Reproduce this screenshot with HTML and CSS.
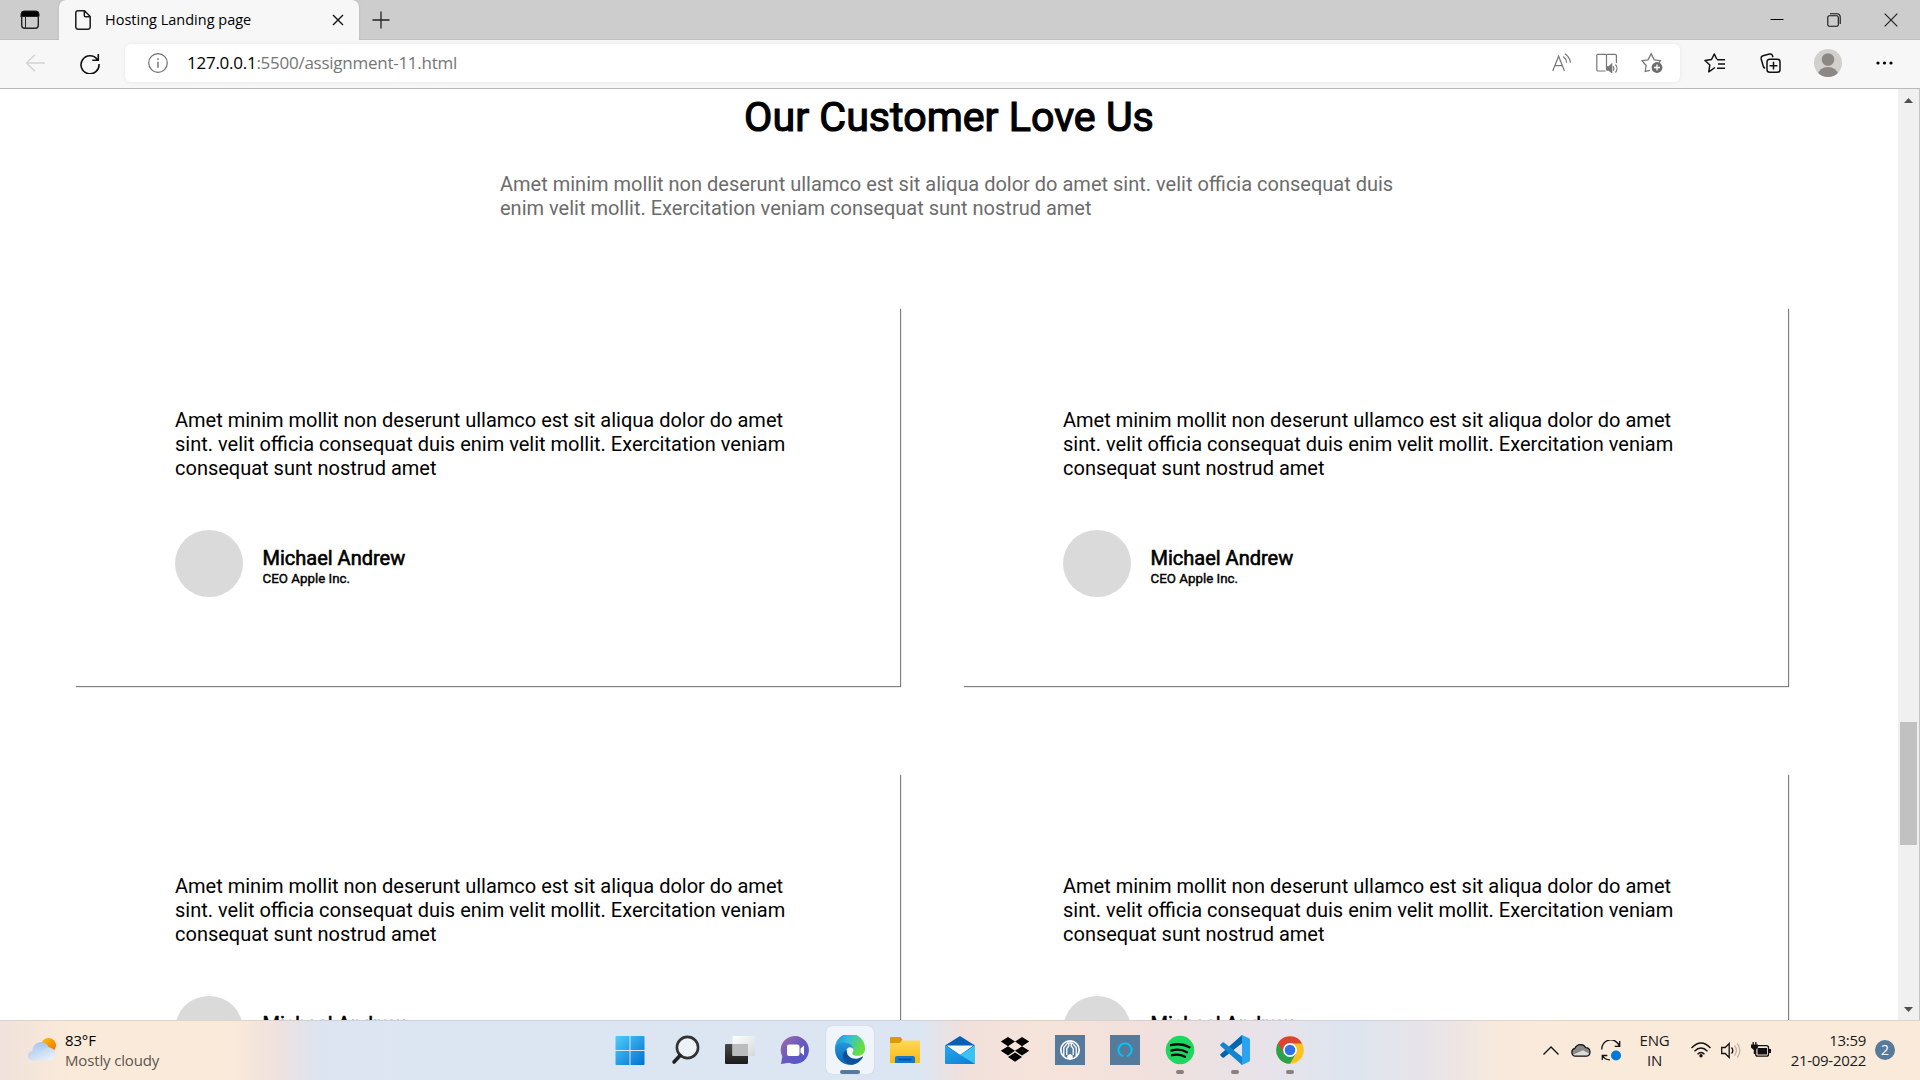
FILE: index.html
```html
<!DOCTYPE html>
<html lang="en">
<head>
<meta charset="utf-8">
<title>Hosting Landing page</title>
<link rel="stylesheet" href="styles.css">
</head>
<body>
<div class="screen">
  <header class="tabstrip">
    <div class="tab-menu"><svg width="20" height="20" viewBox="0 0 20 20"><rect x="1.7" y="1.7" width="16.6" height="16.6" rx="3" fill="none" stroke="#222" stroke-width="1.4"/><path d="M1 7V4a3 3 0 0 1 3-3h12a3 3 0 0 1 3 3v2.500H1zM5.500 6v12" fill="#000" stroke="#222" stroke-width="1"/></svg></div>
    <div class="tab">
      <svg class="file-icon" width="16" height="20" viewBox="0 0 16 20" fill="none" stroke="#1b1b1b" stroke-width="1.5" stroke-linejoin="round"><path d="M3 .8h6.500l5.700 5.700V17a2.200 2.200 0 0 1-2.200 2.200H3A2.200 2.200 0 0 1 .8 17V3A2.200 2.200 0 0 1 3 .8zM9.300 1v4.500c0 .8.500 1.300 1.300 1.300H15"/></svg>
      <span class="tab-title">Hosting Landing page</span>
      <svg class="tab-close" width="12" height="12" viewBox="0 0 12 12" stroke="#111" stroke-width="1.400"><path d="M1 1l10 10M11 1L1 11"/></svg>
    </div>
    <div class="new-tab"><svg width="18" height="18" viewBox="0 0 18 18" stroke="#222" stroke-width="1.300"><path d="M9 .5v17M.5 9h17"/></svg></div>
    <div class="window-controls">
      <span><svg width="14" height="14" viewBox="0 0 14 14"><path d="M.5 6.500h13" stroke="#000"/></svg></span>
      <span><svg width="14" height="14" viewBox="0 0 14 14" fill="none" stroke="#111" stroke-width="1.100"><rect x=".8" y="2.800" width="10.500" height="10.500" rx="1.500"/><path d="M3 .8h7.200A3 3 0 0 1 13.200 3.800V11"/></svg></span>
      <span><svg width="14" height="14" viewBox="0 0 14 14" stroke="#222" stroke-width="1.200"><path d="M.7.7l12.600 12.600M13.300.7L.7 13.300"/></svg></span>
    </div>
  </header>

  <nav class="toolbar">
    <div class="nav-btn back"><svg width="20" height="18" viewBox="0 0 20 18" fill="none" stroke="#d3d3d3" stroke-width="1.500"><path d="M20 9H1.500M10 .7L1.500 9l8.500 8.300"/></svg></div>
    <div class="nav-btn reload"><svg width="20" height="21" viewBox="0 0 20 21" fill="none" stroke="#111" stroke-width="1.600"><path d="M17.300 6.500A9 9 0 1 0 19 11M18.300 1v6.200h-6"/></svg></div>
    <div class="address">
      <svg class="info" width="20" height="20" viewBox="0 0 20 20" fill="none" stroke="#6f6f6f" stroke-width="1.200"><circle cx="10" cy="10" r="9.300"/><path d="M10 8.800v6M10 5.300v1.600" stroke-width="1.400"/></svg>
      <span class="url"><b>127.0.0.1</b>:5500/assignment-11.html</span>
      <div class="address-actions">
        <span><svg width="20" height="20" viewBox="0 0 20 20" fill="none" stroke="#777" stroke-width="1.200"><path d="M.7 18L6.600 3.200 12.500 18M2.900 12.600h7.500M11.200 3.500a9 9 0 0 1 3.500 6.200M12.800.8a12 12 0 0 1 5.600 8.700"/></svg></span>
        <span><svg width="22" height="20" viewBox="0 0 22 20" fill="none" stroke="#777" stroke-width="1.200"><path d="M9.500 18H2a1.200 1.200 0 0 1-1.200-1.200V2.500A1.200 1.200 0 0 1 2 1.300h7q1.500 0 1.500 1.500 0-1.500 1.500-1.500h7.200a1.200 1.200 0 0 1 1.200 1.200V10M10.500 2.800V17M17 13.300a3.500 3.500 0 0 1 0 4.400M19.400 11.500a6 6 0 0 1 0 8"/><path d="M11 13.800h2l2.700-2.600v8.400L13 17.200h-2z" fill="#777"/></svg></span>
        <span><svg width="22" height="22" viewBox="0 0 22 22" fill="none" stroke="#777" stroke-width="1.300"><path d="M9 18.300l-4.800 1.200.9-6L1 8.700l6-.8L10.200 1.800l3 6 6.200.9-1.500 1.800"/><circle cx="16" cy="15.500" r="5.400" fill="#6b6b6b" stroke="none"/><path d="M16 12.500v6M13 15.500h6" stroke="#fff"/></svg></span>
      </div>
    </div>
    <div class="actions">
      <span><svg width="22" height="20" viewBox="0 0 22 20" fill="none" stroke="#111" stroke-width="1.500" stroke-linejoin="round"><path d="M11 14.500l-6.200 4.300 1-6.800L1 7.500l6.500-1L10.300 1l2.500 5.200M13 6.700h8M14 11h7M13 15.300h8"/></svg></span>
      <span><svg width="21" height="20" viewBox="0 0 21 20" fill="none" stroke="#111" stroke-width="1.500"><path d="M5 15.300Q3.500 14.500 3.200 13L1.200 6Q.7 3.500 3 2.800L9.500 1q2.400-.5 3 1.800l.4 1.500"/><rect x="7" y="6.200" width="13" height="13" rx="2.800"/><path d="M13.500 8.800v7.800M9.600 12.700h7.800"/></svg></span>
      <span><svg width="28" height="28" viewBox="0 0 28 28"><defs><clipPath id="face"><circle cx="14" cy="14" r="14"/></clipPath></defs><circle cx="14" cy="14" r="14" fill="#d2d0cc"/><circle cx="14" cy="10.500" r="6.300" fill="#8b8784"/><ellipse cx="14" cy="25.500" rx="9.800" ry="7.500" fill="#8b8784" clip-path="url(#face)"/></svg></span>
      <span><svg width="17" height="4" viewBox="0 0 17 4"><circle cx="2" cy="2" r="1.600"/><circle cx="8.500" cy="2" r="1.600"/><circle cx="15" cy="2" r="1.600"/></svg></span>
    </div>
  </nav>

  <div class="viewport">
    <main class="page">
      <h1>Our Customer Love Us</h1>
      <p class="intro">Amet minim mollit non deserunt ullamco est sit aliqua dolor do amet sint. velit officia consequat duis<br>enim velit mollit. Exercitation veniam consequat sunt nostrud amet</p>
      <section class="cards">
        <article class="card">
          <p class="quote">Amet minim mollit non deserunt ullamco est sit aliqua dolor do amet<br>sint. velit officia consequat duis enim velit mollit. Exercitation veniam<br>consequat sunt nostrud amet</p>
          <div class="person"><div class="avatar"></div><div><div class="name">Michael Andrew</div><div class="role">CEO Apple Inc.</div></div></div>
        </article>
        <article class="card">
          <p class="quote">Amet minim mollit non deserunt ullamco est sit aliqua dolor do amet<br>sint. velit officia consequat duis enim velit mollit. Exercitation veniam<br>consequat sunt nostrud amet</p>
          <div class="person"><div class="avatar"></div><div><div class="name">Michael Andrew</div><div class="role">CEO Apple Inc.</div></div></div>
        </article>
        <article class="card">
          <p class="quote">Amet minim mollit non deserunt ullamco est sit aliqua dolor do amet<br>sint. velit officia consequat duis enim velit mollit. Exercitation veniam<br>consequat sunt nostrud amet</p>
          <div class="person"><div class="avatar"></div><div><div class="name">Michael Andrew</div><div class="role">CEO Apple Inc.</div></div></div>
        </article>
        <article class="card">
          <p class="quote">Amet minim mollit non deserunt ullamco est sit aliqua dolor do amet<br>sint. velit officia consequat duis enim velit mollit. Exercitation veniam<br>consequat sunt nostrud amet</p>
          <div class="person"><div class="avatar"></div><div><div class="name">Michael Andrew</div><div class="role">CEO Apple Inc.</div></div></div>
        </article>
      </section>
    </main>
    <aside class="scrollbar">
      <svg width="9" height="5" viewBox="0 0 9 5"><path d="M0 5L4.500 0 9 5z" fill="#505050"/></svg>
      <div class="thumb"></div>
      <svg class="down" width="9" height="5" viewBox="0 0 9 5"><path d="M0 0l4.500 5L9 0z" fill="#505050"/></svg>
    </aside>
  </div>

  <footer class="taskbar">
    <div class="weather">
      <svg width="30" height="24" viewBox="0 0 30 24"><defs><linearGradient id="sun" x1="0" y1="0" x2="1" y2="1"><stop offset="0" stop-color="#fdc500"/><stop offset="1" stop-color="#f06a00"/></linearGradient><linearGradient id="cl1" x1="0" y1="0" x2="0" y2="1"><stop offset="0" stop-color="#a9c5f2"/><stop offset="1" stop-color="#d9e8fa"/></linearGradient><linearGradient id="cl2" x1="0" y1="0" x2="1" y2="1"><stop offset="0" stop-color="#a9c8ef"/><stop offset="1" stop-color="#f2f7fc"/></linearGradient></defs><circle cx="21.500" cy="7.500" r="7.500" fill="url(#sun)"/><path d="M5.500 14a8.500 8.500 0 0 1 16.300-4.500 6 6 0 1 1 .2 12.500H6z" fill="url(#cl1)"/><path d="M5 22.500a4.700 4.700 0 0 1 0-9.300q5-1 8 1.800 3-5.500 8.500-5.500a6.500 6.500 0 0 1 0 13z" fill="url(#cl2)"/></svg>
      <div class="weather-text"><div>83°F</div><div class="muted">Mostly cloudy</div></div>
    </div>

    <div class="apps">
      <div class="app"><svg width="30" height="30" viewBox="0 0 30 30"><defs><linearGradient id="win" gradientUnits="userSpaceOnUse" x1="0" y1="0" x2="30" y2="30"><stop offset="0" stop-color="#4fd0fb"/><stop offset="1" stop-color="#006fd0"/></linearGradient></defs><path d="M.5 2q0-1 1-1h13v14H.5zM15.500 1h13q1 0 1 1v13h-14zM.5 16h14v14h-13q-1 0-1-1zM15.500 16h14v13q0 1-1 1h-13z" fill="url(#win)"/></svg></div>
      <div class="app"><svg width="30" height="30" viewBox="0 0 30 30" fill="none"><circle cx="17.500" cy="12.500" r="10.600" fill="#eef2f6" stroke="#333" stroke-width="2.600"/><path d="M10 20.500L4 27" stroke="#222" stroke-width="3.600" stroke-linecap="round"/></svg></div>
      <div class="app"><svg width="30" height="30" viewBox="0 0 30 30"><defs><linearGradient id="tv" x1="0" y1="0" x2="0" y2="1"><stop offset="0" stop-color="#484848"/><stop offset="1" stop-color="#1b1b1b"/></linearGradient><linearGradient id="tv2" x1="0" y1="0" x2="1" y2="1"><stop offset="0" stop-color="#fff"/><stop offset="1" stop-color="#d5d8db"/></linearGradient></defs><rect x="0" y="9" width="23" height="20" rx="1" fill="url(#tv)"/><rect x="7.500" y="1" width="22.500" height="20" rx="1" fill="url(#tv2)"/><path d="M7.500 9H23v12H7.500z" fill="#bcbcbc"/></svg></div>
      <div class="app"><svg width="30" height="30" viewBox="0 0 30 30"><defs><linearGradient id="chat" x1="0" y1="0" x2="1" y2="1"><stop offset="0" stop-color="#a66ba5"/><stop offset=".5" stop-color="#675abf"/><stop offset="1" stop-color="#4d55ce"/></linearGradient></defs><path d="M15 1a14 14 0 1 1-6 26.700L1 29l1.300-7.500A14 14 0 0 1 15 1z" fill="url(#chat)"/><rect x="7" y="9.500" width="12.500" height="11.500" rx="2" fill="#fff"/><path d="M20.500 13.500l3.500-3v10l-3.500-3z" fill="#fff"/></svg></div>
      <div class="app active"><svg width="30" height="30" viewBox="0 0 30 30"><defs><linearGradient id="eg1" x1="0" y1="0" x2="1" y2=".4"><stop offset="0" stop-color="#158ed2"/><stop offset=".45" stop-color="#31bde0"/><stop offset="1" stop-color="#68df3d"/></linearGradient><linearGradient id="eg2" x1="0" y1="0" x2="0" y2="1"><stop offset="0" stop-color="#2596dd"/><stop offset="1" stop-color="#0864b5"/></linearGradient></defs><path d="M0 13A15 15 0 0 1 30 14c0 4-3 6.800-7.300 6.800-3.500 0-6-1-5.400-2.800.7-1 1.300-2 1.100-3.500C18 11 14 9.500 10 10Z" fill="url(#eg1)"/><path d="M0 15Q0 7.500 8 7.500c6.500 0 10.400 3.700 10.400 7-1-2-3-2.800-5.200-1.700-4.700 2.600-3 13 5.800 16.500A15 15 0 0 1 0 15z" fill="url(#eg2)"/><path d="M12 14.500c-1.500 6 4.500 10.500 11 9 2-.4 3.500-1.300 4.500-1.900.6-.2.700.2.300.8C23 29.500 17 31 12.500 28.500 5.500 24 7 17 12 14.500z" fill="#0d519c"/></svg></div>
      <div class="app"><svg width="30" height="30" viewBox="0 0 30 30"><defs><linearGradient id="fo" x1="0" y1="0" x2="0" y2="1"><stop offset="0" stop-color="#ffd85a"/><stop offset="1" stop-color="#fbb90b"/></linearGradient></defs><path d="M0 3q0-1 1-1h9.500l2 2.500-2.500 4H0z" fill="#dc9a00"/><path d="M0 8h9q2 0 3.500-2.500H29q1 0 1 1V27q0 1-1 1H1q-1 0-1-1z" fill="url(#fo)"/><path d="M5 28v-5q0-2 2-2h16q2 0 2 2v5z" fill="#1177cf"/><path d="M8.500 24.500h13" stroke="#084b8c" stroke-width="1.500"/></svg></div>
      <div class="app"><svg width="30" height="30" viewBox="0 0 30 30"><defs><linearGradient id="ml" x1="0" y1="0" x2="1" y2="1"><stop offset="0" stop-color="#28a9eb"/><stop offset="1" stop-color="#087bd8"/></linearGradient></defs><path d="M0 10.500L15 1l15 9.500-15 11z" fill="#0760b4"/><path d="M1.500 10.500h27L15 20z" fill="#f4f5f6"/><path d="M30 10.500V28q0 1-1 1H1z" fill="#39c3f3"/><path d="M0 10.500L30 29H1q-1 0-1-1z" fill="url(#ml)"/></svg></div>
      <div class="app"><svg width="30" height="30" viewBox="0 0 30 30"><path d="M8 2l7 4.600-7 4.600L.8 6.600zM22 2l7.200 4.600-7.200 4.600-7-4.600zM8 11.200l7 4.600-7 4.600-7.200-4.600zM22 11.200l7.200 4.600-7.200 4.600-7-4.600zM15 17.400l7 4.600-7 4.800L8 22z"/></svg></div>
      <div class="app"><svg width="30" height="30" viewBox="0 0 30 30" fill="none"><path fill="#557a9b" d="M0 0h30v30H0z"/><circle cx="15" cy="15" r="9.200" stroke="#fff" stroke-width="1.700"/><path d="M8.800 21V12.500L12.800 7.800h4.400l4 4.700V21M11.800 20v-6.500l2-2.500V7.800M18.200 20v-6.500l-2-2.500V7.800" stroke="#fff" stroke-width="1.300"/><path d="M12.300 24v-3.500l2.700-1.500 2.700 1.500V24z" fill="#fff"/></svg></div>
      <div class="app"><svg width="30" height="30" viewBox="0 0 30 30" fill="none"><path fill="#557a9b" d="M0 0h30v30H0z"/><path d="M13 21.300a6.600 6.600 0 1 1 4 0" stroke="#00c8fa" stroke-width="1.900"/></svg></div>
      <div class="app running"><svg width="30" height="30" viewBox="0 0 30 30" fill="none"><circle cx="15" cy="15" r="14.300" fill="#1fd660"/><path d="M6 10.200q10-2.700 18.500 2M6.500 15.500q8.500-2.400 15.500 1.700M7 20.200q7-1.700 13 1.500" stroke="#080808" stroke-width="2.400" stroke-linecap="round"/></svg></div>
      <div class="app running"><svg width="30" height="30" viewBox="0 0 30 30"><path d="M22 0v8.300L4 22.500q-.8.500-1.500 0L.6 20.700q-.8-.9 0-1.700z" fill="#0066b0"/><path d="M.6 11q-.8-.8 0-1.700l1.900-1.800q.7-.5 1.500 0L22 21.700V30z" fill="#1484d0"/><path d="M22 30q-1 0-2-.8 2 .8 2-2V2.800q0-2.800-2-2Q21 0 22 0l7 3.200q1 .5 1 1.600v20.500q0 1-1 1.500z" fill="#29a3f2"/></svg></div>
      <div class="app running"><svg width="30" height="30" viewBox="0 0 30 30"><circle cx="15" cy="15" r="13.800" fill="#fcc31e"/><path d="M15 15L3.050 8.100A13.800 13.800 0 0 0 15 28.800l6-10.300z" fill="#2aa14b"/><path d="M3.050 8.100A13.800 13.800 0 0 1 27 8.400H15l-6 10z" fill="#df4132"/><circle cx="15" cy="15" r="6.900" fill="#fff"/><circle cx="15" cy="15" r="5.300" fill="#2a73e8"/></svg></div>
    </div>

    <div class="tray">
      <span class="cell"><svg width="16" height="9" viewBox="0 0 16 9" fill="none" stroke="#111" stroke-width="1.300"><path d="M.5 8.500L8 1l7.500 7.500"/></svg></span>
      <span class="cell"><svg width="20" height="14" viewBox="0 0 20 14"><path d="M4.500 13.200A4 4 0 0 1 4 5.300a6 6 0 0 1 10.800-.6 4.300 4.300 0 0 1 .8 8.500z" fill="#898989"/><path d="M2 11.800L12 7.200l7 4q-1 2-3.400 2H4.500q-1.500 0-2.500-1.400z" fill="#ddd"/><path d="M4.500 13.200A4 4 0 0 1 4 5.300a6 6 0 0 1 10.800-.6 4.300 4.300 0 0 1 .8 8.500z" fill="none" stroke="#111" stroke-width="1.200"/></svg></span>
      <span class="cell"><svg width="20" height="21" viewBox="0 0 20 21" fill="none" stroke="#111" stroke-width="1.300"><path d="M.8 9.500A9 9 0 0 1 18.300 6M18.700 1v5.300h-5M1.300 20v-4.500h5M1.500 15.500Q4 20 9 19.800"/><circle cx="15" cy="15.500" r="5" fill="#0078d7" stroke="none"/></svg></span>
      <div class="lang">ENG<br>IN</div>
      <span class="cell"><svg width="20" height="16" viewBox="0 0 20 16" fill="none" stroke="#111" stroke-width="1.400"><path d="M.5 6q9.500-10 19 0M3.500 9.200q6.500-6.500 13 0M6.500 12.200q3.500-3.500 7 0"/><circle cx="10" cy="13.800" r="1.700" fill="#111" stroke="none"/></svg></span>
      <span class="cell"><svg width="20" height="17" viewBox="0 0 20 17" fill="none" stroke="#111" stroke-width="1.300"><path d="M.7 5.500h3.500l4-4v14l-4-4H.7zM10.500 5.500a4.500 4.500 0 0 1 0 6"/><path d="M13.500 3.500a7.500 7.500 0 0 1 0 10M16.300 1.500a11 11 0 0 1 0 14" stroke="#c0b2a6"/></svg></span>
      <span class="cell"><svg width="20" height="16" viewBox="0 0 20 16"><rect x="4.700" y="3.700" width="12.800" height="10.500" rx="2" fill="none" stroke="#111" stroke-width="1.300"/><path d="M6.500 6h9.500v6.500H6.500zM18 7h2v4h-2zM0 2.500h1.500V0h1.300v2.500h1.400V0h1.300v2.500H7v3L4.300 8v4H2.800V8L0 5.500z" fill="#111"/></svg></span>
      <div class="clock">13:59<br>21-09-2022</div>
      <div class="badge">2</div>
    </div>
  </footer>
</div>
</body>
</html>
```
FILE: styles.css
```css
* { box-sizing: border-box; }
body { margin: 0; font-family: "Open Sans", "Noto Sans", sans-serif; color: #000; }
svg { display: block; flex: none; }
.screen { width: 1920px; height: 1080px; overflow: hidden; display: flex; flex-direction: column; background: #fff; }

/* Tab strip */
.tabstrip { height: 40px; flex: none; display: flex; background: #cdcdcd; box-shadow: inset 0 -1px 0 #bfbfbf; }
.tab-menu { width: 59px; display: flex; align-items: center; justify-content: center; border-bottom-right-radius: 6px; }
.tab { width: 300px; display: flex; align-items: center; padding: 0 15px 0 16px; background: #f7f7f7; border-radius: 7px 7px 0 0; box-shadow: 0 0 2px #aaa; clip-path: inset(0 -3px 0 -3px); }
.tab-title { flex: 1; margin-left: 14px; font-size: 14.500px; line-height: 20px; white-space: nowrap; }
.new-tab { width: 43px; display: flex; align-items: center; justify-content: center; }
.window-controls { margin-left: auto; padding-right: 1px; display: flex; }
.window-controls span { width: 57px; display: flex; align-items: center; justify-content: center; }

/* Toolbar */
.toolbar { height: 49px; flex: none; display: flex; align-items: center; padding-bottom: 2px; background: #f7f7f7; border-bottom: 1px solid #b9b9b9; }
.nav-btn { display: flex; justify-content: center; }
.back { width: 70px; }
.reload { width: 40px; }
.address { width: 1555px; height: 38px; margin-left: 15px; padding-left: 23px; display: flex; align-items: center; background: #fff; border-radius: 6px; box-shadow: 0 0 4px #e6e6e6; }
.url { margin-left: 19px; font-size: 17px; line-height: 24px; letter-spacing: -.260px; color: #767676; white-space: nowrap; }
.url b { font-weight: 400; color: #000; }
.address-actions { margin-left: auto; margin-right: 6px; display: flex; }
.address-actions span { width: 45px; display: flex; align-items: center; justify-content: center; }
.actions { flex: 1; display: flex; padding: 0 6px 0 7px; }
.actions span { width: 56.500px; display: flex; align-items: center; justify-content: center; }
.actions span:nth-child(2) { padding-right: 3px; }
.actions span:nth-child(3) { padding-right: 1px; }

/* Page */
.viewport { height: 931px; flex: none; display: flex; overflow: hidden; }
.page { width: 1898px; font-family: Roboto, sans-serif; }
h1 { margin: 3px 0 0; text-align: center; font-size: 41.200px; font-weight: 400; line-height: 51px; -webkit-text-stroke: 1.200px #000; }
.intro { width: 898px; margin: 29px auto 0; font-size: 20px; line-height: 24px; color: #6c6c6c; white-space: nowrap; }
.cards { margin-top: 88px; padding-left: 75px; display: grid; grid-template-columns: 825px 825px; grid-auto-rows: 378px; gap: 88px 63px; }
.card { padding: 100px; background: #fff; box-shadow: 1px 1px 1px #808080; }
.quote { margin: 0; font-size: 20px; line-height: 24px; white-space: nowrap; }
.person { display: flex; align-items: center; gap: 20px; margin-top: 50px; height: 67px; }
.avatar { width: 67.500px; height: 67px; border-radius: 50%; background: #dadada; }
.name { margin-top: 6px; font-size: 20px; line-height: 23px; -webkit-text-stroke: .6px #000; }
.role { font-size: 13.330px; line-height: 17px; -webkit-text-stroke: .4px #000; }

.scrollbar { width: 22px; display: flex; flex-direction: column; align-items: center; padding: 9px 2px 8px 1px; background: #f0f0f0; border-right: 1px solid #c4c4c4; }
.thumb { width: 17px; height: 123px; margin-top: 619px; background: #c1c1c1; }
.down { margin-top: auto; }

/* Taskbar */
.taskbar { height: 60px; flex: none; display: flex; background: linear-gradient(90deg, #f0e2dc 0, #faead9 70px, #faead9 230px, #f0e2dd 275px, #dde4f1 320px, #dce6f2 420px, #dce6f2 920px, #f1e0db 965px, #f6e4db 1040px, #f1e0dc 1150px, #e7e3ea 1270px, #dde5f0 1350px, #e8e4e8 1430px, #f8e9dc 1500px, #faead9 1600px, #faeada 100%); box-shadow: inset 0 1px 0 rgba(150, 150, 160, .25); font-size: 15px; line-height: 20px; }
.weather { width: 602.500px; padding: 0 0 0 27px; display: flex; align-items: center; gap: 8px; }
.weather-text { font-size: 15px; letter-spacing: -.15px; }
.muted { color: #5c5650; }
.apps { display: flex; }
.app { width: 55px; display: flex; align-items: center; justify-content: center; position: relative; }
.active::before { content: ""; position: absolute; inset: 6px 3.500px; background: #f0f4fb; border-radius: 6px; box-shadow: 0 0 1px #aab; }
.active svg { position: relative; }
.active::after { content: ""; position: absolute; bottom: 6px; width: 20px; height: 4px; border-radius: 2px; background: #557a9b; }
.running::after { content: ""; position: absolute; bottom: 6px; width: 8px; height: 4px; border-radius: 2px; background: #87807f; }
.tray { margin-left: auto; display: flex; align-items: center; padding-right: 25px; color: #1b1b1b; }
.cell { width: 30px; display: flex; justify-content: center; }
.lang { width: 60px; padding-right: 3px; letter-spacing: -.2px; text-align: center; }
.clock { width: 90px; text-align: right; letter-spacing: -.3px; white-space: nowrap; }
.badge { width: 20px; height: 20px; margin-left: 9px; border-radius: 50%; background: #557a9b; color: #fff; font-size: 14px; text-align: center; }
```
